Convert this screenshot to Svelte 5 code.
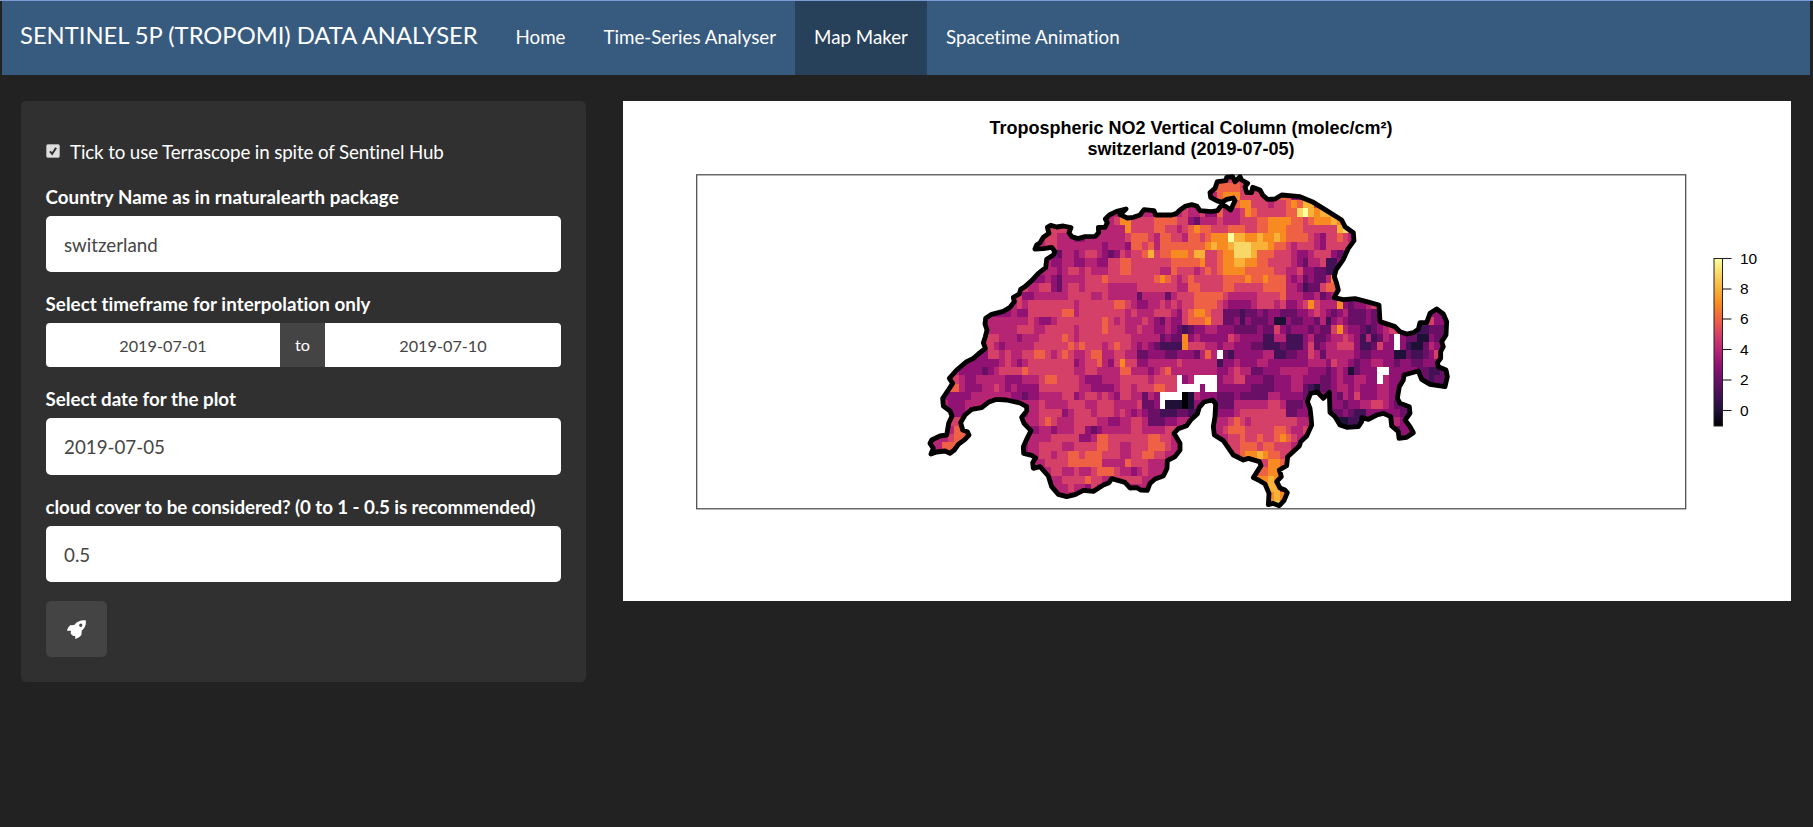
<script>
  const tabs = ['Home', 'Time-Series Analyser', 'Map Maker', 'Spacetime Animation'];
  const active = 'Map Maker';
  let terrascope = $state(true);
  let country = $state('switzerland');
  let from = $state('2019-07-01');
  let to = $state('2019-07-10');
  let date = $state('2019-07-05');
  let cloud = $state('0.5');

  // Inferno classes, from the lowest to the highest column density
  const palette = {
    a: '#000004', b: '#1f1037', c: '#431156', d: '#691066', e: '#901273', f: '#b62574',
    g: '#d54068', h: '#ef6145', i: '#f78b22', j: '#f9b237', k: '#f9d766', l: '#fcffa0',
    w: '#ffffff'
  };
  const classes = 'lkjihgfedcba'.split('');

  // One line per raster row: each entry is the first column of a run and its class.
  // "." is outside the country, "w" is a missing value.
  const raster = [
    '52g 54.',
    '50h 54g 55.',
    '49f 50h 51i 54g 58. 61h 62.',
    '51. 53h 54i 56g 59f 60g 62h 63i 64h 65j 67g 68.',
    '32f 33i 34. 37f 39. 43f 44g 45f 47g 48e 50h 51f 54g 55i 56h 57g 62h 64k 65l 66j 67i 68j 70i 71.',
    '30f 32g 33i 35g 39h 43g 45e 46d 47f 50g 51f 54g 57h 59i 63h 65g 66h 67i 70j 71i 72.',
    '21g 24f 25. 29f 34i 35g 39h 41g 43f 44g 45h 46i 47h 49g 52h 55g 57h 59i 62h 65g 71j 72k 73i 74.',
    '19f 20g 22f 25. 26e 27f 34g 35h 38g 39f 40h 42g 44f 45h 47g 48h 49i 52l 53j 55i 57j 58i 60j 61i 62h 66g 67f 68e 69g 71h 72g 73f 74.',
    '18f 20g 22f 30e 31f 34e 35h 37g 38h 39f 40h 48i 49j 50i 52j 53k 56j 59i 60h 62g 63f 64g 67f 68e 69g 73.',
    '21e 22d 23f 25e 26f 27g 29f 30e 31d 32e 33g 34f 35g 37h 38j 39g 40h 42i 45h 46j 48g 50h 51i 53k 56j 57h 60g 63f 64e 66f 67g 70e 71d 72e 73.',
    '20f 21e 23f 25e 27f 29e 31g 33h 35g 42h 47i 48g 50h 51i 53j 55i 57h 59g 63f 64e 65d 66f 68g 69c 71e 72.',
    '19f 22e 23f 24g 26f 27g 28f 31g 33h 35g 40f 42h 43g 46f 47g 48h 49g 50h 51i 55h 60g 62f 64g 65e 67d 69c 71.',
    '17e 20f 21e 22d 23f 27g 30h 31g 39h 40i 41h 42g 43f 44g 45h 46g 51h 55i 56h 58i 59h 62f 63e 64f 65d 66e 67d 69f 70i 71.',
    '16g 17f 19g 21e 22d 23f 24g 26f 27g 31f 36g 43f 45h 47g 51h 53g 58h 62f 64e 65c 66d 68g 69h 71.',
    '15g 16e 18f 24g 28f 30g 31f 36d 37f 41d 42f 43g 46h 51g 52f 57g 61h 62f 65e 67f 68d 69e 70f 71.',
    '14f 15g 16f 17g 25f 26g 32h 34g 35f 36e 38f 40g 41f 42g 43f 44g 46h 50g 51f 52e 56f 57g 60f 61g 62e 64f 65g 66i 67g 68f 71i 72e 73d 74e 76f 77g 78.',
    '12e 14f 15e 17g 23h 25f 26g 34f 35g 36f 39g 42f 43e 44g 45h 46i 48h 49g 51d 54c 55d 57e 58d 59e 61d 64e 66f 67g 68f 69e 70d 71e 72f 73d 76e 77d 78e 79. 87e 90.',
    '10f 17g 18f 19e 21f 22g 30h 31g 32f 33g 34f 37g 38f 39e 40d 41f 42e 44g 45h 48i 49g 51d 53e 54c 55e 56d 59e 60b 62e 63d 65e 67d 68f 69c 70e 71f 72e 73d 76e 77d 78e 79. 87g 88e 90.',
    '10f 15g 18f 20g 25f 26g 30h 31g 34f 36g 37f 39e 41f 42e 43d 44c 45d 46e 48f 50e 53d 57e 58d 60g 61e 62d 63e 66d 67e 68d 70g 71i 72f 73e 75d 76c 77d 78e 79f 80g 81. 84e 85c 87d 90.',
    '10g 12f 15e 16f 19g 23h 24g 25f 26g 35f 40d 41e 42d 44i 45e 46f 47e 52g 53f 54e 58c 60f 62c 65e 66f 67d 69e 70f 72g 73f 74e 75c 76f 77c 78d 79f 80e 81w 82e 83d 85b 87e 88d 90.',
    '10g 11f 12e 13f 18g 24h 25g 26h 27g 30f 31g 32h 33g 35f 36e 37f 38e 39d 40c 44i 45g 48f 50e 51f 53e 56d 58c 61d 62c 65e 66g 67d 68e 69f 71g 74e 75c 77d 78g 79e 81w 82e 83c 84b 86d 87f 88e 89.',
    '8e 10g 12f 13g 14f 16g 18h 20g 21f 22g 23h 24g 25f 27g 28h 30f 32g 34f 36d 38e 41d 43e 46d 47f 48h 49f 50w 51d 52c 53e 58f 60c 62d 64e 66g 67f 68d 69f 74e 75d 77e 81b 83d 84c 86d 87e 88g 89.',
    '6e 12f 13g 14f 15e 16f 17g 25e 26f 27g 29h 30f 31e 32g 33i 34g 36e 38f 43g 44f 50c 51e 53f 54e 57f 59e 66f 69e 70g 71f 73e 74d 75e 77f 79e 81d 82e 84d 86e 88.',
    '6e 9d 10e 11f 12g 16h 17g 25f 27g 29f 33h 35f 38e 39f 40g 41h 42f 50e 52f 53g 54f 56d 58e 61f 66e 69d 70e 71f 72e 73b 74d 75e 78w 80e 82. 86d 87c 89d 90.',
    '4g 5f 6e 8f 13e 16f 19g 20h 22g 26f 27e 30f 33g 38f 39g 43w 44e 45f 46w 50e 51f 53g 55e 58d 60e 63f 65e 68d 70e 71f 72e 74f 76e 78w 79f 80e 82. 85d 87c 88d 90.',
    '4h 5f 6e 9f 11g 12f 13e 14f 15e 19g 26f 28e 32f 33g 35f 36g 39h 41g 43w 47e 48w 50e 56d 60e 63f 65d 66c 67b 68d 70e 71f 73e 74f 75e 78f 80e 82.',
    '3e 7f 14e 16d 17e 19f 23g 25e 26f 27g 29f 30g 31f 32e 33g 35f 37d 38f 39e 40w 44a 45b 46f 47e 50d 53e 54d 59f 61e 65d 66. 70e 71d 72f 73e 74g 75e 78f 80e 81.',
    '4e 6f 10g 11. 17f 19g 20f 24g 27f 29g 32f 36g 37d 39e 40w 41b 44a 45b 46e 48. 50d 53f 59g 61f 62d 65e 66. 70e 72d 73e 75f 77g 79f 80e 81d 84e 85.',
    '4e 6f 7. 16e 17f 19g 23e 24f 25g 28f 29g 32f 33g 34f 35e 36f 37e 38d 40c 43d 45c 46. 51e 53f 54g 62d 64e 66. 71d 72e 73d 74c 75. 80e 82d 84e 85.',
    '4g 6. 17f 19g 20h 21g 22f 25g 29f 31e 33f 35g 37f 38d 41e 43f 46. 51f 52g 53h 54g 55f 56g 64f 66. 72b 73c 74. 80e 81f 82e 84.',
    '3f 4h 7. 18e 19f 21e 22f 25g 27e 28d 29e 30f 35g 37f 41g 43f 44. 50f 51g 52h 55g 60h 62g 63f 65g 66. 81d 82e 84d 85.',
    '1f 3g 4h 7. 17f 21g 26e 28f 29h 31g 38h 40g 42f 44. 51f 52g 54h 55g 57h 58g 60h 61i 62h 63g 64f 65. 82e 83.',
    '1f 2h 4. 16e 17f 19g 23f 25g 29h 31g 33f 35g 38h 41g 42f 44. 52g 54h 57g 58h 60g 63f 64.',
    '17f 19g 21f 22g 24h 26g 27h 30g 33f 35g 37h 39g 41f 43. 53g 54h 55i 57j 58i 59h 61g 62.',
    '18f 20g 24h 30f 34h 35g 38f 41. 57g 59i 61h 62.',
    '20f 21g 23f 25g 26f 28g 29h 32g 33f 35e 36f 37g 38f 41. 57h 59i 61.',
    '21f 23g 27h 28g 30f 32g 37f 38. 57i 59j 60i 61.',
    '22f 24g 25f 27e 28g 29f 30. 36f 38e 39. 58i 59j 60.',
    '59i 60j 61i 62.',
    '60k 61.'
  ];

  const COL = 17.17;
  const ROW = 25.07;
  const LEFT = 32;
  const TOP = 14.5;
  // Runs that touch the outside are widened by a column; the border clips them.
  const cells = raster.flatMap((line, r) => {
    const runs = line.split(' ').map((t) => [parseInt(t), t.slice(-1)]);
    return runs
      .map(([k, c], n) => {
        const open = n === 0 || runs[n - 1][1] === '.';
        const next = runs[n + 1];
        const start = open ? k - 1 : k;
        const end = next ? next[0] + (next[1] === '.' ? 1 : 0) : k;
        return { x: LEFT + start * COL, y: TOP + r * ROW, w: (end - start) * COL, fill: c === '.' ? null : palette[c] };
      })
      .filter((c) => c.fill && c.w > 0);
  });

  const border =
    '892,35 885,55 870,68 872,82 890,92 905,97 920,88 940,84 945,92 932,120 915,108 905,105 892,122 875,125 840,122 830,108 815,104 797,108 780,120 770,130 755,135 707,135 702,122 672,119 660,135 640,142 622,144 600,134 618,117 590,124 568,135 556,147 562,158 555,172 535,172 536,188 526,199 495,200 474,206 455,200 447,188 453,173 430,168 410,171 392,166 382,172 387,190 370,202 360,218 350,225 345,237 370,236 395,232 405,245 400,255 380,268 377,293 355,310 335,332 315,350 302,358 298,372 280,382 283,395 270,412 250,424 215,433 197,445 195,462 201,480 196,500 190,518 196,535 175,552 160,565 140,575 110,600 88,625 98,640 85,660 68,685 70,708 90,723 96,738 86,760 80,795 60,798 35,810 30,820 40,835 33,852 50,846 75,843 90,850 103,840 115,823 135,808 147,795 142,785 128,780 122,758 135,735 155,718 185,713 205,697 230,688 260,690 300,699 320,710 320,723 305,742 312,760 333,782 320,808 310,830 311,850 335,856 347,864 338,878 340,895 360,890 385,918 395,950 415,973 440,980 465,974 490,961 520,964 550,945 567,938 575,926 615,937 630,954 650,953 662,960 682,961 690,940 705,927 730,918 741,895 742,872 765,860 780,840 780,820 762,790 775,776 800,767 812,750 832,732 838,712 852,696 878,690 887,702 885,740 880,770 883,795 910,812 940,855 970,870 985,865 1018,875 1023,887 1000,923 1015,930 1035,942 1047,970 1045,1004 1058,1000 1078,1007 1092,992 1102,968 1095,960 1080,954 1070,935 1084,920 1078,900 1100,887 1103,860 1125,840 1138,828 1142,815 1160,798 1175,765 1173,740 1170,715 1162,695 1172,670 1192,666 1210,685 1228,667 1230,727 1245,740 1260,765 1280,772 1315,770 1325,755 1325,743 1345,748 1370,735 1390,730 1412,740 1415,768 1435,785 1437,805 1460,802 1480,788 1470,770 1455,750 1470,730 1468,710 1440,700 1432,685 1438,650 1450,630 1452,615 1495,603 1505,628 1530,643 1575,650 1582,620 1578,600 1555,590 1552,578 1562,565 1562,545 1570,530 1565,515 1578,495 1580,455 1570,432 1550,417 1530,430 1520,458 1500,458 1495,478 1480,488 1460,492 1440,485 1425,470 1380,455 1377,405 1340,395 1305,386 1270,389 1242,383 1255,360 1250,340 1243,320 1248,300 1270,268 1285,235 1302,212 1300,188 1275,170 1265,150 1220,122 1180,97 1140,80 1085,75 1065,87 1042,88 1028,75 1020,60 998,52 995,68 980,68 975,50 983,40 965,30 960,20 945,35 938,20 920,22 918,32';

  const ticks = [
    [10, 157.5], [8, 188], [6, 218], [4, 248.5], [2, 279], [0, 309.5]
  ];
</script>

<div class="page">
  <nav>
    <span class="brand">SENTINEL 5P (TROPOMI) DATA ANALYSER</span>
    {#each tabs as tab}
      <a class:active={tab === active} href="#{tab}">{tab}</a>
    {/each}
  </nav>

  <main>
    <form class="well">
      <label class="check">
        <input type="checkbox" bind:checked={terrascope} />
        <span class="box">
          <svg viewBox="0 0 14 14"><path d="M3.400 7.400 L6 10.200 L10.700 3.200" /></svg>
        </span>
        <span class="caption">Tick to use Terrascope in spite of Sentinel Hub</span>
      </label>

      <label class="title wide" for="country">Country Name as in rnaturalearth package</label>
      <input id="country" class="field" bind:value={country} />

      <label class="title wide" for="from">Select timeframe for interpolation only</label>
      <div class="range">
        <input id="from" bind:value={from} />
        <span>to</span>
        <input bind:value={to} />
      </div>

      <label class="title" for="date">Select date for the plot</label>
      <input id="date" class="field tall" bind:value={date} />

      <label class="title tight" for="cloud">cloud cover to be considered? (0 to 1 - 0.5 is recommended)</label>
      <input id="cloud" class="field" bind:value={cloud} />

      <button type="button" aria-label="Run">
        <svg viewBox="0 0 58 58">
          <path fill-rule="evenodd" d="M57 1C45-1 31 3 22 15L10 16C5 19 2 26 0 33L13 33C10 38 11 42 13 44L16 44L17 48C20 49 23 49 25 47L25 58C32 56 40 52 44 46L45 33C54 25 60 14 57 1ZM42 11a5 5 0 1 1 0 10a5 5 0 1 1 0-10Z" />
        </svg>
      </button>
    </form>

    <svg class="plot" viewBox="0 0 1168 500">
      <defs>
        <linearGradient id="scale" x1="0" y1="0" x2="0" y2="1">
          {#each classes as c, n}
            <stop offset={n / 11} stop-color={palette[c]} />
          {/each}
        </linearGradient>
        <linearGradient id="base" x1="0" y1="0" x2="1" y2="0">
          <stop offset=".7" stop-color={palette.f} />
          <stop offset=".7" stop-color={palette.e} />
        </linearGradient>
        <clipPath id="country-shape"><polygon points={border} /></clipPath>
      </defs>
      <g class="heading">
        <text x="568" y="33">Tropospheric NO2 Vertical Column (molec/cm²)</text>
        <text x="568" y="54">switzerland (2019-07-05)</text>
      </g>
      <rect class="frame" x="73.700" y="73.800" width="989" height="334" />
      <svg x="297" y="69" width="560" height="345" viewBox="0 0 1680 1035">
        <polygon points={border} fill="url(#base)" />
        <g clip-path="url(#country-shape)">
          <g shape-rendering="crispEdges">
            {#each cells as c}
              <rect x={c.x} y={c.y} width={c.w} height={ROW} fill={c.fill} />
            {/each}
          </g>
        </g>
        <polygon class="border" points={border} />
      </svg>
      <rect class="scale" x="1091" y="157.500" width="8.500" height="167.500" />
      <g class="ticks">
        {#each ticks as [label, y]}
          <path d="M1099.500 {y}h9" />
          <text x="1117" y={y + 5.4}>{label}</text>
        {/each}
      </g>
    </svg>
  </main>
</div>

<style>
  :global(body) { background: #222; }
  .page {
    box-sizing: border-box;
    width: 1813px;
    height: 827px;
    overflow: hidden;
    border-top: 1px solid #7a9cd3;
    background: #222;
    color: #fff;
    font: 18.75px/26.8px Lato, sans-serif;
    font-variant-ligatures: none;
  }
  nav {
    display: flex;
    height: 74px;
    margin: 0 3px 0 2px;
    background: #375a7f;
  }
  .brand {
    padding: 0 18.75px 0 18px;
    font-size: 23.75px;
    line-height: 68px;
    white-space: nowrap;
  }
  nav a {
    padding: 0 19px;
    color: #fff;
    line-height: 72px;
    text-decoration: none;
    white-space: nowrap;
  }
  nav a.active { background: #28415b; }
  main {
    display: flex;
    align-items: flex-start;
    gap: 37px;
    padding: 26px 22px 0 21px;
  }
  .well {
    box-sizing: border-box;
    display: flex;
    flex-direction: column;
    width: 565px;
    height: 581px;
    padding: 38px 25px 0;
    border-radius: 5px;
    background: #303030;
  }
  .check { display: flex; align-items: center; gap: 10px; height: 27px; margin-bottom: 18px; }
  .check input { display: none; }
  .caption { letter-spacing: -0.13px; }
  .box {
    box-sizing: border-box;
    width: 14px;
    height: 14px;
    margin-top: -3px;
    border: 1px solid #a5a5a5;
    border-radius: 2px;
    background: #dedede;
  }
  .box svg { display: block; width: 12px; height: 12px; }
  .box path { fill: none; stroke: #333; stroke-width: 2.4; }
  .title { height: 26px; margin: 0 0 6px -0.5px; font-weight: 700; white-space: nowrap; }
  .wide { letter-spacing: 0.06px; }
  .tight { letter-spacing: -0.09px; }
  input {
    box-sizing: border-box;
    min-width: 0;
    border: 0;
    outline: 0;
    background: #fff;
    color: #464545;
    font: 18.75px Lato, sans-serif;
  }
  .field { width: 515px; height: 56px; margin: 0 0 19px; padding: 0 18px; border-radius: 5px; }
  .tall { height: 57px; }
  .range {
    display: flex;
    width: 515px;
    height: 44px;
    margin-bottom: 19px;
    overflow: hidden;
    border-radius: 4px;
    font-size: 16.25px;
    line-height: 44px;
  }
  .range input { flex: 1; font-size: 16.25px; text-align: center; }
  .range input:first-child { flex: 0 0 234px; }
  .range span { width: 45px; background: #444; text-align: center; }
  button {
    display: flex;
    align-items: center;
    justify-content: center;
    width: 61px;
    height: 56px;
    padding: 0;
    border: 0;
    border-radius: 5px;
    background: #444;
  }
  button svg { width: 19px; height: 19px; fill: #fff; }
  .plot { display: block; width: 1168px; height: 500px; background: #fff; }
  .plot text { font-family: "Liberation Sans", Arial, sans-serif; fill: #000; }
  .heading text { font-size: 18px; font-weight: 700; text-anchor: middle; }
  .frame { fill: none; stroke: #444; stroke-width: 1.2; }
  .border { fill: none; stroke: #000; stroke-width: 14.500; stroke-linejoin: round; }
  .scale { fill: url(#scale); stroke: #222; stroke-width: 1; }
  .ticks path { stroke: #222; stroke-width: 1.1; }
  .ticks text { font-size: 15.5px; }
</style>
